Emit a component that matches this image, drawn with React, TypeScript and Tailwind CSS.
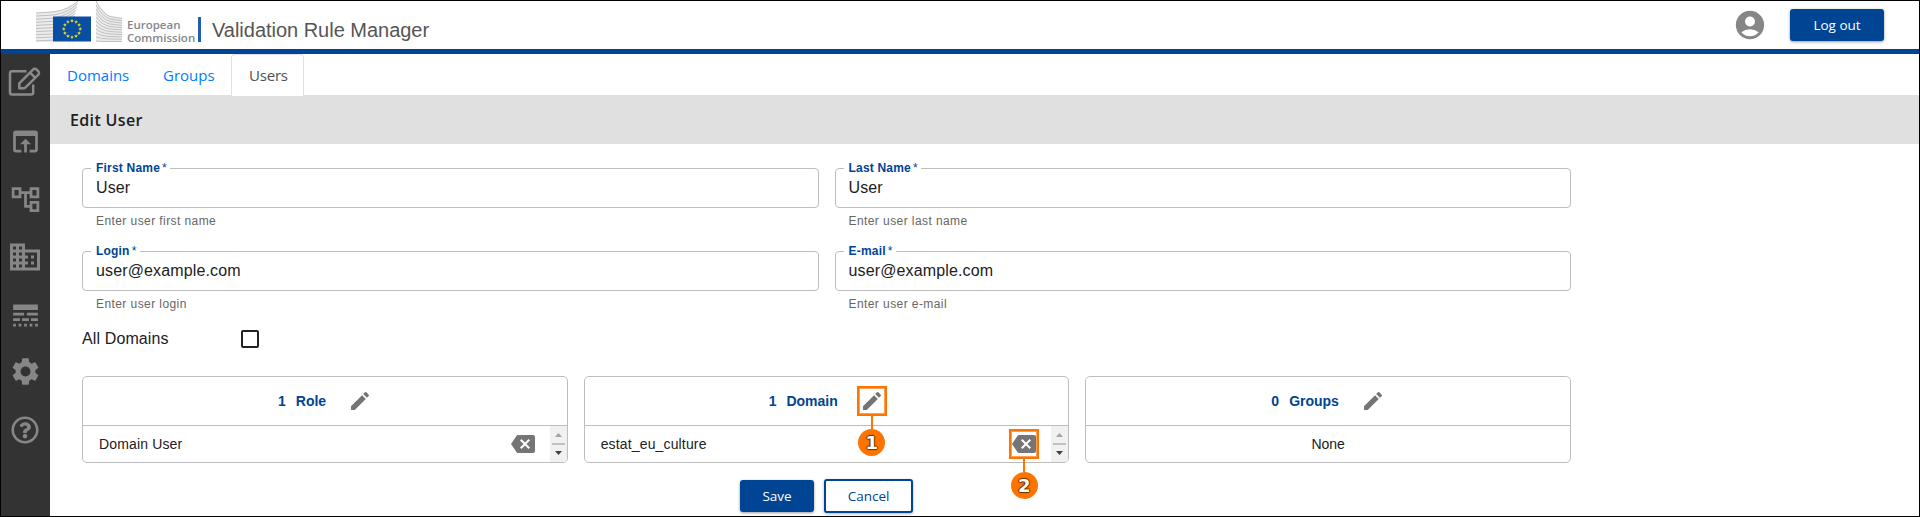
import React from "react";
import {
  MdEdit,
  MdBackspace,
  MdOpenInBrowser,
  MdOutlineAccountTree,
  MdDomain,
  MdLineStyle,
  MdSettings,
  MdAccountCircle,
} from "react-icons/md";
import { FaRegQuestionCircle } from "react-icons/fa";

const stars = Array.from({ length: 12 }, (_, i) => {
  const a = (i * Math.PI) / 6;
  return { x: 36 + 8.2 * Math.sin(a), y: 28 - 8.2 * Math.cos(a) };
});

function Star({ x, y }: { x: number; y: number }) {
  const pts = Array.from({ length: 10 }, (_, i) => {
    const r = i % 2 === 0 ? 1.9 : 0.9;
    const a = (i * Math.PI) / 5;
    return `${x + r * Math.sin(a)},${y - r * Math.cos(a)}`;
  }).join(" ");
  return <polygon points={pts} fill="#e3dd20" />;
}

function Logo() {
  return (
    <svg width="87" height="42" viewBox="0 0 87 42" fill="none">
      <path d="M0 12 L18 10.5 Q32 9 42 0 L37 16 L17 16 L17 41 L0 41z" fill="#ececed" />
      <path d="M60 0 Q67 13 74 15 L86 17 L86 41 L60 41z" fill="#ececed" />
      <g stroke="#bdbfc1" strokeWidth="1">
        {Array.from({ length: 10 }, (_, i) => (
          <path
            key={i}
            d={`M0 ${12 + i * 3.1} L18 ${10.8 + i * 3.15} Q${32 - i * 0.4} ${9 + i * 2.8} ${42 - i * 0.6} ${i * 3}`}
          />
        ))}
        {Array.from({ length: 11 }, (_, i) => (
          <path
            key={i}
            d={`M60 ${i * 4} Q${67 - i * 0.3} ${13 + i * 2.75} 74 ${15.5 + i * 2.5} L86 ${17.5 + i * 2.3}`}
          />
        ))}
      </g>
      <rect x="17" y="15.5" width="38" height="25" fill="#0a4ea2" />
      {stars.map((s, i) => (
        <Star key={i} x={s.x} y={s.y} />
      ))}
    </svg>
  );
}

function ComposeIcon() {
  return (
    <svg width="34" height="32" viewBox="0 0 34 32" fill="none" stroke="#8a8a8a" strokeWidth="2.5" strokeLinejoin="round">
      <path d="M18.5 5.3H4a2 2 0 0 0-2 2V26.5a2 2 0 0 0 2 2H23.2a2 2 0 0 0 2-2v-8" />
      <path d="M11.3 22.3v-5L25 3.6a2.5 2.5 0 0 1 3.6 0l1.6 1.6a2.5 2.5 0 0 1 0 3.6L17.3 21.6q-.7.7-1.7.7z" />
      <path d="M22.3 6.9l4.8 4.8" />
    </svg>
  );
}

function Field({ label, value, hint }: { label: string; value: string; hint: string }) {
  return (
    <div className="h-[83px] min-w-0">
      <fieldset className="-mt-[7px] h-[47px] rounded-[4px] border border-[#bdbdbd] pl-[13px]">
        <legend className="-ml-[5px] flex h-[14px] items-center gap-[2px] pl-[5px] pr-[3px] text-[12px] font-bold leading-[14px] tracking-[0.2px] text-[#004494]">
          <span>{label}</span>
          <span className="font-normal">*</span>
        </legend>
        <div className="mt-[3px] text-[16px] leading-[20px] tracking-[0.14px] text-[#212121]">{value}</div>
      </fieldset>
      <div className="mt-[5px] pl-[14px] text-[12px] leading-[16px] tracking-[0.42px] text-[#666]">{hint}</div>
    </div>
  );
}

function Scroller() {
  return (
    <div className="flex h-full w-[17px] flex-col items-center justify-between rounded-br-[4px] bg-[#f1f1f1] py-[7px]">
      <svg width="7" height="4" viewBox="0 0 7 4"><path d="M0 4 3.5 0 7 4z" fill="#a3a3a3" /></svg>
      <div className="h-[2px] w-[13px] bg-[#c1c1c1]" />
      <svg width="7" height="4" viewBox="0 0 7 4"><path d="M0 0 3.5 4 7 0z" fill="#404040" /></svg>
    </div>
  );
}

function Marker({ n }: { n: number }) {
  return (
    <div className="pointer-events-none absolute -left-[3px] -top-[3px] flex w-[30px] flex-col items-center">
      <div className="h-[30px] w-[30px] shrink-0 border-2 border-[#ff7300] shadow-[inset_0_0_0_1px_#ffa052]" />
      <div className="h-[13px] w-[2px] shrink-0 bg-[#ff7300]" />
      <div className="flex h-[27px] w-[27px] shrink-0 items-center justify-center rounded-full bg-[#ff7300] font-['DejaVu_Sans',sans-serif] text-[18px] font-bold leading-none text-white [text-shadow:1px_0_1px_#663300,-1px_0_1px_#663300,0_1px_1px_#663300,0_-1px_1px_#663300]">
        {n}
      </div>
    </div>
  );
}

function Card({ count, title, marker, titlePad, children }: {
  count: number;
  title: string;
  marker?: number;
  titlePad: string;
  children: React.ReactNode;
}) {
  return (
    <div className="flex h-[87px] min-w-0 flex-col rounded-[5px] border border-[#bdbdbd]">
      <div className={`flex h-[49px] items-center border-b border-[#bdbdbd] text-[14px] font-bold text-[#004494] ${titlePad}`}>
        <span className="mr-[10px]">{count}</span>
        <span>{title}</span>
        <span className="relative ml-[22px] flex h-6 w-6 items-center justify-center text-[#757575]">
          <MdEdit size={24} />
          {marker && <Marker n={marker} />}
        </span>
      </div>
      <div className="flex h-[36px] items-center text-[14px] text-[#212121]">{children}</div>
    </div>
  );
}

function Item({ name, marker }: { name: string; marker?: number }) {
  return (
    <>
      <span className="grow pl-4 tracking-[0.15px]">{name}</span>
      <span className="relative mr-[15px] flex h-6 w-6 items-center justify-center text-[#757575]">
        <MdBackspace size={24} />
        {marker && <Marker n={marker} />}
      </span>
      <Scroller />
    </>
  );
}

export default function App() {
  return (
    <div className="flex h-[517px] w-[1920px] flex-col overflow-hidden border border-black bg-white font-['Liberation_Sans',Arial,sans-serif] text-[#212121]">
      <header className="flex h-[53px] shrink-0 items-start border-b-[5px] border-[#004494] pl-[35px] pr-[35px]">
        <Logo />
        <div className="ml-[4px] mt-[17px] w-[68px] font-['Open_Sans',sans-serif] text-[11.5px] font-semibold leading-[13px] text-[#85878a]">
          <div>European</div>
          <div>Commission</div>
        </div>
        <div className="ml-[3px] mt-[16px] h-[25px] w-[3px] bg-[#1f5fae]" />
        <h1 className="ml-[11px] mt-[17px] text-[20px] leading-[24px] tracking-[-0.02px] text-[#555]">Validation Rule Manager</h1>
        <MdAccountCircle className="ml-auto mt-[7px] text-[#868686]" size={34} />
        <button className="ml-[23px] mt-[8px] h-8 w-[94px] rounded-[3px] bg-[#004494] font-['Open_Sans',sans-serif] text-[13.5px] text-white shadow-[0_1px_3px_rgba(0,0,0,0.4)]">
          Log out
        </button>
      </header>
      <div className="flex min-h-0 grow">
        <nav className="flex w-[49px] shrink-0 flex-col items-center bg-[#333] pr-px pt-[11px] text-[#868686]">
          <div className="flex h-[34px] items-center"><ComposeIcon /></div>
          <div className="mt-[25px] flex h-[34px] items-center"><MdOpenInBrowser size={33} /></div>
          <div className="mt-[24px] flex h-[34px] items-center"><MdOutlineAccountTree size={33} /></div>
          <div className="mt-[24px] flex h-[34px] items-center"><MdDomain size={36} /></div>
          <div className="mt-[24px] flex h-[34px] items-center"><MdLineStyle size={33} /></div>
          <div className="mt-[22px] flex h-[34px] items-center"><MdSettings size={33} /></div>
          <div className="mt-[25px] flex h-[34px] items-center"><FaRegQuestionCircle size={28} /></div>
        </nav>
        <main className="min-w-0 grow">
          <div className="relative z-10 flex h-[41px] font-['Open_Sans',sans-serif] text-[15px] text-[#007bff]">
            <a className="w-[96px] pl-[17px] pt-[9px] leading-[24px]">Domains</a>
            <a className="w-[85px] pl-[17px] pt-[9px] leading-[24px]">Groups</a>
            <a className="h-[42px] w-[73px] rounded-t-[4px] border border-b-0 border-[#dee2e6] bg-white pl-[17px] pt-[8px] leading-[24px] tracking-[-0.2px] text-[#495057]">Users</a>
          </div>
          <h2 className="flex h-[49px] items-center bg-[#e0e0e0] pl-5 pt-px font-['Open_Sans',sans-serif] text-[16px] font-semibold tracking-[0.35px]">Edit User</h2>
          <div className="ml-8 mt-6 w-[1489px]">
            <div className="grid grid-cols-2 gap-x-4">
              <Field label="First Name" value="User" hint="Enter user first name" />
              <Field label="Last Name" value="User" hint="Enter user last name" />
              <Field label="Login" value="user@example.com" hint="Enter user login" />
              <Field label="E-mail" value="user@example.com" hint="Enter user e-mail" />
            </div>
            <div className="-mt-[4px] flex h-[18px] items-center">
              <span className="w-[159px] text-[16px] leading-[18px] tracking-[0.12px]">All Domains</span>
              <span className="h-[18px] w-[18px] rounded-[2px] border-2 border-[#212121]" />
            </div>
            <div className="mt-[28px] grid grid-cols-3 gap-x-4">
              <Card count={1} title="Role" titlePad="pl-[195px]">
                <Item name="Domain User" />
              </Card>
              <Card count={1} title="Domain" marker={1} titlePad="pl-[184px]">
                <Item name="estat_eu_culture" marker={2} />
              </Card>
              <Card count={0} title="Groups" titlePad="pl-[185px]">
                <span className="grow text-center">None</span>
              </Card>
            </div>
            <div className="mt-4 flex items-center pl-[658px] font-['Open_Sans',sans-serif] text-[13.5px]">
              <button className="h-8 w-[74px] rounded-[3px] bg-[#004494] text-white shadow-[0_1px_3px_rgba(0,0,0,0.4)]">Save</button>
              <button className="ml-[10px] h-[34px] w-[89px] rounded-[3px] border-2 border-[#004494] bg-white text-[#004494] shadow-[0_1px_3px_rgba(0,0,0,0.3)]">Cancel</button>
            </div>
          </div>
        </main>
      </div>
    </div>
  );
}
